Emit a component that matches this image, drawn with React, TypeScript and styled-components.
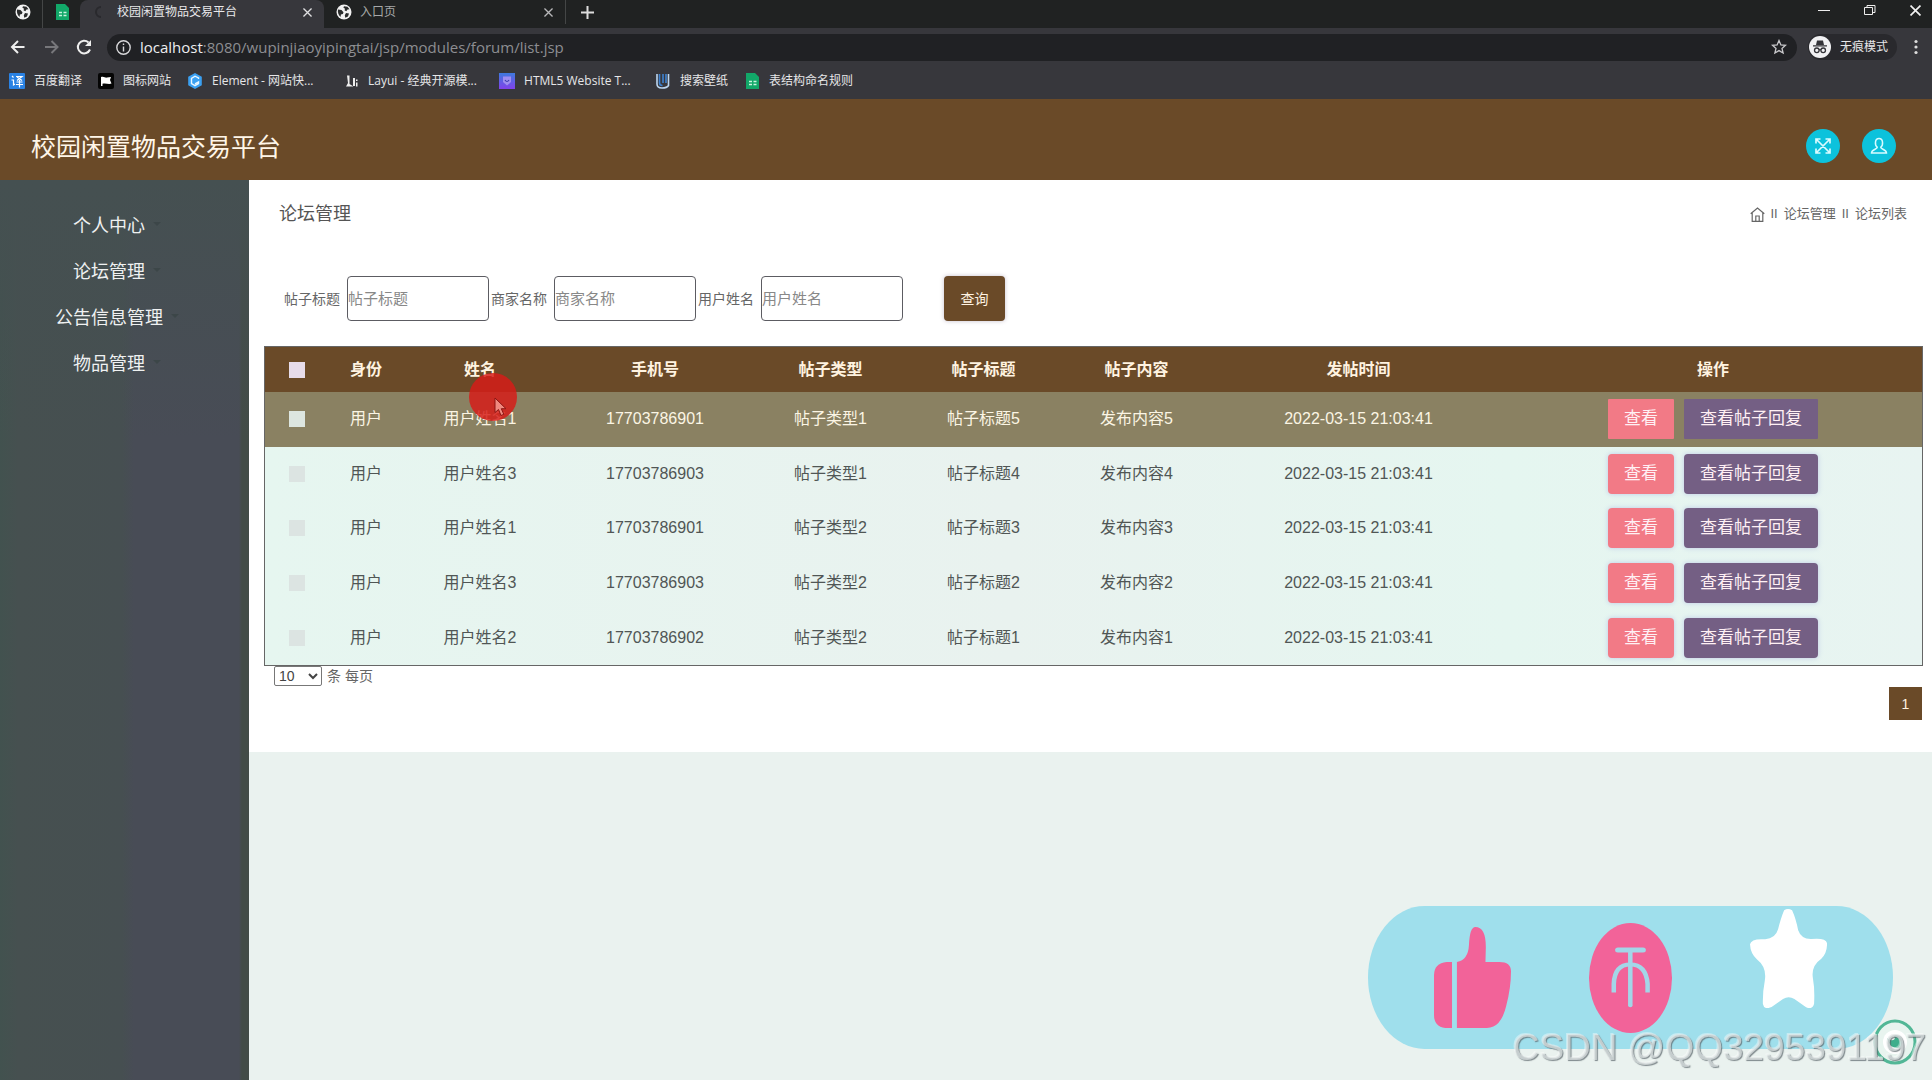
import React from "react";
import styled, { createGlobalStyle } from "styled-components";

const ui = `"Liberation Sans", "Noto Sans CJK SC", sans-serif`;
const chromeFont = `"Open Sans", "Noto Sans CJK SC", sans-serif`;
const brown = "#6a4a28";

const GlobalStyle = createGlobalStyle`
  *, *::before, *::after { box-sizing: border-box; }
  body { margin: 0; overflow: hidden; font-family: ${ui}; color: #555; background: #eaf2ef; }
  button, input, select { font-family: inherit; }
  button { padding: 0; border: 0; background: none; color: inherit; cursor: pointer; }
  a { color: inherit; text-decoration: none; }
  svg { display: block; flex: none; }
`;

const Page = styled.div`
  display: flex;
  flex-direction: column;
  min-height: 100vh;
`;

/* Browser frame */

const Browser = styled.div`
  font-family: ${chromeFont};
  color: #e6e6e8;
  background: #37373c;
`;

const TabStrip = styled.div`
  display: flex;
  height: 28px;
  background: #202222;
`;

const PinnedTab = styled.button<{ $divider?: boolean }>`
  display: flex;
  justify-content: center;
  width: ${(p) => (p.$divider ? 43 : 37)}px;
  padding: 4px 0 0 ${(p) => (p.$divider ? 4 : 0)}px;
  border-right: ${(p) => (p.$divider ? "1px solid #444646" : "0")};
`;

const Tab = styled.div<{ $active?: boolean }>`
  display: flex;
  align-items: center;
  gap: 8px;
  width: ${(p) => (p.$active ? 244 : 241)}px;
  padding: 0 12px 4px;
  border-radius: 8px 8px 0 0;
  font-size: 12px;
  line-height: 16px;
  color: ${(p) => (p.$active ? "#e8e8ea" : "#a6a8a8")};
  background: ${(p) => (p.$active ? "#37373c" : "transparent")};
`;

const TabTitle = styled.span`
  flex: 1;
  white-space: nowrap;
`;

const NewTab = styled.button`
  display: flex;
  align-items: center;
  height: 24px;
  padding: 0 15px;
  border-left: 1px solid #444646;
`;

const WindowControls = styled.div`
  display: flex;
  align-items: center;
  gap: 34px;
  margin-left: auto;
  padding: 0 11px 8px 0;
`;

const Toolbar = styled.div`
  display: flex;
  align-items: center;
  height: 38px;
  padding: 0 14px 0 9px;
`;

const NavButtons = styled.div`
  display: flex;
  gap: 15px;
  width: 98px;
`;

const AddressBar = styled.div`
  display: flex;
  flex: 1;
  align-items: center;
  gap: 9px;
  height: 27px;
  padding: 0 10px 0 9px;
  border-radius: 14px;
  font-size: 15px;
  line-height: 20px;
  color: #8d8e92;
  background: #202124;
`;

const Host = styled.span`
  color: #eeeef0;
`;

const Url = styled.span`
  flex: 1;
`;

const Incognito = styled.button`
  display: flex;
  align-items: center;
  gap: 9px;
  height: 26px;
  margin: 0 17px 0 11px;
  padding: 0 9px 0 1px;
  border-radius: 13px;
  font-size: 12px;
  line-height: 16px;
  background: #29292d;
`;

const Bookmarks = styled.nav`
  display: flex;
  gap: 16px;
  height: 33px;
  padding: 6px 9px;
`;

const Bookmark = styled.a<{ $wide?: boolean }>`
  display: flex;
  align-items: center;
  gap: 9px;
  width: ${(p) => (p.$wide ? "140px" : "auto")};
  height: 17px;
  font-size: 12px;
  line-height: 16px;
  white-space: nowrap;
`;

/* Application */

const Header = styled.header`
  display: flex;
  align-items: center;
  justify-content: space-between;
  height: 81px;
  padding: 14px 36px 0 31px;
  color: #fff6e8;
  background: ${brown};
`;

const Brand = styled.h1`
  margin: 0;
  font-size: 25px;
  font-weight: 400;
  line-height: 36px;
`;

const HeaderActions = styled.div`
  display: flex;
  gap: 22px;
  padding-bottom: 2px;
`;

const RoundButton = styled.button`
  display: grid;
  place-items: center;
  width: 34px;
  height: 34px;
  border-radius: 50%;
  background: #0cc2dc;
`;

const Body = styled.div`
  display: flex;
  flex: 1;
`;

const Sidebar = styled.nav`
  width: 249px;
  padding: 21px 31px 0 0;
  background:
    linear-gradient(#455051, rgba(69, 80, 81, 0) 260px),
    linear-gradient(90deg, #42524f, #465050 18px, #464f51 122px, #484c56 134px, #484c56 239px, #434c47 242px);
`;

const MenuLink = styled.a`
  display: flex;
  align-items: center;
  justify-content: center;
  height: 46px;
  font-size: 18px;
  color: #eff1f1;
`;

const Caret = styled.span`
  width: 0;
  margin-right: -8px;
  border: 4px solid transparent;
  border-top-color: #3c4648;
  transform: translate(8px, 2px);
`;

const Main = styled.main`
  flex: 1;
  min-width: 0;
`;

const Panel = styled.section`
  padding: 19px 10px 32px 15px;
  background: #fff;
`;

const PanelHead = styled.div`
  display: flex;
  justify-content: space-between;
  align-items: center;
  padding: 0 15px;
`;

const PanelTitle = styled.h2`
  margin: 0;
  font-size: 18px;
  font-weight: 400;
  line-height: 30px;
`;

const Crumbs = styled.div`
  display: flex;
  align-items: center;
  gap: 6px;
  font-size: 13px;
  line-height: 16px;
  color: #666;
`;

const Search = styled.form`
  display: flex;
  align-items: center;
  gap: 2px;
  padding: 47px 0 25px 20px;
`;

const Field = styled.label`
  display: flex;
  align-items: center;
  gap: 7px;
  font-size: 14px;
  line-height: 16px;
  color: #666;
`;

const TextInput = styled.input`
  width: 142px;
  height: 45px;
  padding: 0;
  border: 1px solid #5c5c62;
  border-radius: 4px;
  outline: 0;
  font-size: 15px;
  background: #fff;
  &::placeholder { color: #888; opacity: 1; }
`;

const SearchButton = styled.button`
  width: 61px;
  height: 45px;
  margin-left: 39px;
  border-radius: 4px;
  font-size: 14px;
  line-height: 16px;
  color: #fff3e2;
  background: ${brown};
  box-shadow: 0 0 4px rgba(90, 70, 110, 0.35);
`;

const Table = styled.table`
  width: 100%;
  height: 320px;
  table-layout: fixed;
  border-collapse: separate;
  border-spacing: 0;
  border: 1px solid #666;
  font-size: 16px;
  line-height: 20px;
  text-align: center;
  color: #505655;
  background: linear-gradient(90deg, #e6f6f0, #e9f2ef 45%, #e5f6f0 75%, #e8f4f1);
`;

const Th = styled.th`
  height: 45px;
  padding: 0;
  font-weight: 700;
  color: #fff3e0;
  background: ${brown};
`;

const Row = styled.tr<{ $active: boolean }>`
  color: ${(p) => (p.$active ? "#fbf5e4" : "inherit")};
  background: ${(p) => (p.$active ? "#8a8162" : "transparent")};
`;

const Td = styled.td`
  height: 54px;
  padding: 0;
`;

const Check = styled.input<{ $tone: string }>`
  display: block;
  appearance: none;
  width: 16px;
  height: 16px;
  margin: 0 auto;
  background: ${(p) => p.$tone};
`;

const Actions = styled.div`
  display: flex;
  justify-content: center;
  gap: 10px;
`;

const ActionButton = styled.button<{ $color: string; $flat: boolean }>`
  height: 40px;
  padding: 0 16px;
  border-radius: ${(p) => (p.$flat ? 1 : 4)}px;
  font-size: 17px;
  line-height: 20px;
  color: #fff0f4;
  background: ${(p) => p.$color};
  box-shadow: ${(p) => (p.$flat ? "none" : "0 0 5px rgba(130, 140, 220, 0.4)")};
`;

const PageSize = styled.label`
  display: flex;
  align-items: center;
  gap: 5px;
  padding-left: 10px;
  font-size: 14px;
  line-height: 20px;
  color: #666;
`;

const SizeSelect = styled.select`
  width: 48px;
  height: 20px;
  padding: 0;
  border: 1px solid #777;
  border-radius: 2px;
  font-size: 14px;
  color: #444;
  background: #fff;
`;

const Pager = styled.div`
  display: flex;
  justify-content: flex-end;
  padding-top: 1px;
`;

const PageButton = styled.button`
  width: 33px;
  height: 33px;
  font-size: 14px;
  color: #fff3e0;
  background: ${brown};
`;

/* Things floating above the page */

const Pointer = styled.div`
  position: absolute;
  left: 469px;
  top: 373px;
  width: 48px;
  height: 48px;
  border-radius: 50%;
  background: rgba(214, 28, 24, 0.84);
  pointer-events: none;
  svg { margin: 24px 0 0 25px; }
`;

const Reactions = styled.div`
  position: fixed;
  right: 39px;
  bottom: 31px;
  display: flex;
  align-items: center;
  gap: 78px;
  width: 525px;
  height: 143px;
  padding-left: 66px;
  border-radius: 57px / 72px;
  background: #9fdfec;
`;

const Raised = styled.span`
  padding-bottom: 38px;
`;

const Recorder = styled.div`
  position: fixed;
  right: 15px;
  bottom: 15px;
`;

const Watermark = styled.div`
  position: fixed;
  right: 6px;
  bottom: 11px;
  font-size: 37px;
  line-height: 42px;
  white-space: nowrap;
  color: rgba(226, 232, 232, 0.7);
  text-shadow: 1px 1px 1px rgba(90, 100, 105, 0.75), -1px -1px 0 rgba(255, 255, 255, 0.4);
`;

/* Icons */

const Globe = () => (
  <svg width="16" height="16" viewBox="0 0 16 16">
    <circle cx="8" cy="8" r="7.5" fill="#f2f2f2" />
    <path d="M2 5.5 5.5 6l2 2.2-.6 1.8-2 .6L4.6 13C2.600 11.500 1.500 8.500 2 5.500zM8 2.300l3.500.4 2 2.600-2 .3-1.200 1.600-1.800-.9.600-1.600-1.700-.9zM10 9l3 .500-1 3-2.700 1.200-.5-2.400z" fill="#2a2c2c" />
  </svg>
);
const Sheet = () => (
  <svg width="16" height="16" viewBox="0 0 16 16">
    <path d="M2 0h9l4 4v12H2z" fill="#12a869" />
    <path d="M5 8.500h3M9.500 8.500h3M5 11.500h3M9.500 11.500h3" stroke="#c9f3df" strokeWidth="1.300" />
  </svg>
);
const Cross = ({ size = 9, color = "#e0e0e2" }: { size?: number; color?: string }) => (
  <svg width={size} height={size} viewBox="0 0 10 10" stroke={color} strokeWidth="1.500">
    <path d="M.5.5l9 9M9.500.5l-9 9" />
  </svg>
);
const Arrow = ({ color, flip }: { color: string; flip?: boolean }) => (
  <svg width="18" height="18" viewBox="0 0 18 18" fill="none" stroke={color} strokeWidth="2">
    <path d={flip ? "M3 9h12M9.500 3 15.500 9l-6 6" : "M15.500 9h-12M9 3 3 9l6 6"} />
  </svg>
);
const Reload = () => (
  <svg width="18" height="18" viewBox="0 0 18 18" fill="none" stroke="#eee" strokeWidth="2">
    <path d="M15 11.500A6.300 6.300 0 1 1 13.500 4.500" />
    <path d="M16 2v6h-6z" fill="#eee" stroke="none" />
  </svg>
);
const Info = () => (
  <svg width="15" height="15" viewBox="0 0 15 15" fill="none" stroke="#d8d8da" strokeWidth="1.400">
    <circle cx="7.500" cy="7.500" r="6.700" />
    <path d="M7.500 6.500v5M7.500 3.500v1.600" />
  </svg>
);
const StarOutline = () => (
  <svg width="16" height="16" viewBox="0 0 16 16" fill="none" stroke="#c8c8cb" strokeWidth="1.300">
    <path d="m8 1.500 1.900 4.400 4.600.4-3.500 3.100 1.100 4.600L8 11.600 3.900 14 5 9.400 1.500 6.300l4.600-.4z" />
  </svg>
);
const IncognitoIcon = () => (
  <svg width="22" height="22" viewBox="0 0 22 22">
    <circle cx="11" cy="11" r="11" fill="#f1f1f3" />
    <path d="M8 4.500h6l1 4.500H7zM4 9.200h14v1.300H4z" fill="#333338" />
    <g fill="none" stroke="#333338" strokeWidth="1.300">
      <circle cx="7.800" cy="14.300" r="2.300" />
      <circle cx="14.200" cy="14.300" r="2.300" />
      <path d="M10 14q1-.8 2 0" />
    </g>
  </svg>
);
const Dots = () => (
  <svg width="4" height="16" viewBox="0 0 4 16" fill="#ddd">
    <circle cx="2" cy="2.500" r="1.600" />
    <circle cx="2" cy="8" r="1.600" />
    <circle cx="2" cy="13.500" r="1.600" />
  </svg>
);
const TranslateIcon = () => (
  <svg width="16" height="16" viewBox="0 0 16 16">
    <rect width="16" height="16" rx="1" fill="#2a82e4" />
    <path d="M3 3l1.500 1.500M2.500 7h2v5l1.500-1M7 3.500h6L8 7.500M8 4l5 3.500M7.500 9h6M7 11.500h7M10.500 7v7.500" fill="none" stroke="#fff" strokeWidth="1.200" />
  </svg>
);
const FlagIcon = () => (
  <svg width="16" height="16" viewBox="0 0 16 16">
    <rect width="16" height="16" rx="2" fill="#050505" />
    <path d="M3 13V4c3-1 4 1 6 .6l4-.6-1 3 1.500 3.500c-3 1.300-6-1-9 .3V13z" fill="#fff" />
  </svg>
);
const ElementIcon = () => (
  <svg width="16" height="16" viewBox="0 0 16 16">
    <path d="M8 0l6.800 3.800v8.400L8 16l-6.800-3.800V3.800z" fill="#3aa0f2" />
    <path d="M11.500 6V5L8 3.200 4.500 5.300v5.200L8 12.600l3.500-2V9L8 10.800" fill="none" stroke="#e9f6ff" strokeWidth="1.400" />
  </svg>
);
const LayuiIcon = () => (
  <svg width="16" height="16" viewBox="0 0 16 16">
    <path d="M4 2.500h2.500V11l4 2.500H3L5 10zM10 5h2v8h-2zM13 6.500h1.500V8H13zM13 9.500h1.500v4H13z" fill="#eee" />
  </svg>
);
const HtmlIcon = () => (
  <svg width="16" height="16" viewBox="0 0 16 16">
    <defs>
      <linearGradient id="violet" x2="0" y2="1">
        <stop stopColor="#3f79de" />
        <stop offset="1" stopColor="#8142ea" />
      </linearGradient>
    </defs>
    <rect width="16" height="16" fill="url(#violet)" />
    <path d="M4 3.500h8V9L8 12.500 4 9z" fill="#9f8df0" />
    <path d="M6 7q2 3 4 0" fill="none" stroke="#3d3fae" strokeWidth="1.200" />
  </svg>
);
const WallpaperIcon = () => (
  <svg width="16" height="16" viewBox="0 0 16 16" fill="none">
    <path d="M2 1v10q0 4 5 4t6.500-2.500V1" stroke="#bcd6f0" strokeWidth="1.600" />
    <path d="M4.500 1v9q0 2.500 3 2.500M8 1v9M11 1v9" stroke="#3f82d0" strokeWidth="1.600" />
  </svg>
);
const ExpandIcon = () => (
  <svg width="18" height="18" viewBox="0 0 18 18" fill="none" stroke="#d9fbff" strokeWidth="1.700">
    <path d="M2 2l14 14M16 2 2 16M2 6.500V2h4.500M11.500 2H16v4.500M16 11.500V16h-4.500M6.500 16H2v-4.500" />
  </svg>
);
const PersonIcon = () => (
  <svg width="18" height="18" viewBox="0 0 18 18" fill="none" stroke="#d9fbff" strokeWidth="1.500">
    <path d="M7.300 10.300C4.500 8 4.700 1.500 9 1.500s4.500 6.500 1.700 8.800c0 2 5.800 2 5.800 5.700h-15c0-3.700 5.800-3.700 5.800-5.700z" />
  </svg>
);
const HomeIcon = () => (
  <svg width="15" height="15" viewBox="0 0 15 15" fill="none" stroke="#666" strokeWidth="1.200">
    <path d="M.7 6.800 7.500 1l6.800 5.800M2.200 6v8.300h10.600V6M5.800 14V9h3.400v5" />
  </svg>
);
const ThumbIcon = () => (
  <svg width="77" height="101" viewBox="250 140 205 303" preserveAspectRatio="none" fill="#f26399">
    <path d="M298 245h-14q-34 4-34 40v118q0 36 30 40h18z" />
    <path d="M311 245q30-6 32-50 2-55 17-55 28 0 28 60l-1 45h37q31 0 31 28 0 50-13 105-14 65-51 65h-80z" />
  </svg>
);
const CoinIcon = () => (
  <svg width="83" height="110" viewBox="660 127 221 329" preserveAspectRatio="none">
    <ellipse cx="770.500" cy="291.500" rx="110.500" ry="164.500" fill="#f26399" />
    <path d="M737 208h67" stroke="#a3d6e8" strokeWidth="15" strokeLinecap="round" />
    <path d="M770 208v165" stroke="#a3d6e8" strokeWidth="12" strokeLinecap="round" />
    <path d="M726 335v-26q2-58 44-58t46 58v26" fill="none" stroke="#a3d6e8" strokeWidth="12" />
  </svg>
);
const StarIcon = () => (
  <svg width="77" height="99" viewBox="1087 88 203 297" preserveAspectRatio="none" fill="#fff">
    <path d="M1177 92q10-8 21 0 10 25 16 60 8 27 35 26 38-4 41 12 1 30-15 47-28 22-22 60 5 30 3 75-5 20-22 10l-30-24q-15-11-30 0l-30 24q-20 10-23-9-1-35 5-70 6-40-21-64-17-18-18-45 3-18 40-15 27-2 34-30 8-36 16-57z" />
  </svg>
);

/* Data */

const bookmarks = [
  { label: "百度翻译", icon: <TranslateIcon /> },
  { label: "图标网站", icon: <FlagIcon /> },
  { label: "Element - 网站快...", icon: <ElementIcon />, wide: true },
  { label: "Layui - 经典开源模...", icon: <LayuiIcon />, wide: true },
  { label: "HTML5 Website T...", icon: <HtmlIcon />, wide: true },
  { label: "搜索壁纸", icon: <WallpaperIcon /> },
  { label: "表结构命名规则", icon: <Sheet /> },
];
const menu = ["个人中心", "论坛管理", "公告信息管理", "物品管理"];
const filters = ["帖子标题", "商家名称", "用户姓名"];
const columns = [
  { title: "身份", width: 76 },
  { title: "姓名", width: 152 },
  { title: "手机号", width: 198 },
  { title: "帖子类型", width: 153 },
  { title: "帖子标题", width: 153 },
  { title: "帖子内容", width: 153 },
  { title: "发帖时间", width: 291 },
  { title: "操作", width: 418 },
];
const posts = [
  ["用户", "用户姓名1", "17703786901", "帖子类型1", "帖子标题5", "发布内容5", "2022-03-15 21:03:41"],
  ["用户", "用户姓名3", "17703786903", "帖子类型1", "帖子标题4", "发布内容4", "2022-03-15 21:03:41"],
  ["用户", "用户姓名1", "17703786901", "帖子类型2", "帖子标题3", "发布内容3", "2022-03-15 21:03:41"],
  ["用户", "用户姓名3", "17703786903", "帖子类型2", "帖子标题2", "发布内容2", "2022-03-15 21:03:41"],
  ["用户", "用户姓名2", "17703786902", "帖子类型2", "帖子标题1", "发布内容1", "2022-03-15 21:03:41"],
];

const BrowserFrame = () => (
  <Browser>
    <TabStrip>
      <PinnedTab $divider aria-label="标签页"><Globe /></PinnedTab>
      <PinnedTab aria-label="表格"><Sheet /></PinnedTab>
      <Tab $active>
        <svg width="17" height="16" viewBox="0 0 17 16" fill="none" stroke="#29292d" strokeWidth="2">
          <path d="M9 3a5 5 0 0 0 0 10" />
        </svg>
        <TabTitle>校园闲置物品交易平台</TabTitle>
        <button aria-label="关闭标签页"><Cross /></button>
      </Tab>
      <Tab>
        <Globe />
        <TabTitle>入口页</TabTitle>
        <button aria-label="关闭标签页"><Cross color="#b8b8ba" /></button>
      </Tab>
      <NewTab aria-label="新标签页">
        <svg width="13" height="13" viewBox="0 0 13 13" stroke="#ddd" strokeWidth="2">
          <path d="M6.500 0v13M0 6.500h13" />
        </svg>
      </NewTab>
      <WindowControls>
        <button aria-label="最小化">
          <svg width="12" height="12" viewBox="0 0 12 12" stroke="#eee"><path d="M0 6.500h12" /></svg>
        </button>
        <button aria-label="还原">
          <svg width="12" height="12" viewBox="0 0 12 12" fill="none" stroke="#eee">
            <path d="M.5 3.500h8v7h-8zM3 3V1.500h8v7H9" />
          </svg>
        </button>
        <button aria-label="关闭"><Cross size={11} color="#f2f2f2" /></button>
      </WindowControls>
    </TabStrip>
    <Toolbar>
      <NavButtons>
        <button aria-label="后退"><Arrow color="#eee" /></button>
        <button aria-label="前进"><Arrow color="#77777b" flip /></button>
        <button aria-label="刷新"><Reload /></button>
      </NavButtons>
      <AddressBar>
        <Info />
        <Url><Host>localhost</Host>:8080/wupinjiaoyipingtai/jsp/modules/forum/list.jsp</Url>
        <button aria-label="收藏"><StarOutline /></button>
      </AddressBar>
      <Incognito><IncognitoIcon />无痕模式</Incognito>
      <button aria-label="菜单"><Dots /></button>
    </Toolbar>
    <Bookmarks>
      {bookmarks.map((b) => (
        <Bookmark key={b.label} href="#" $wide={b.wide}>{b.icon}{b.label}</Bookmark>
      ))}
    </Bookmarks>
  </Browser>
);

const PostTable = () => (
  <Table>
    <colgroup>
      <col width={63} />
      {columns.map((c) => <col key={c.title} width={c.width} />)}
    </colgroup>
    <thead>
      <tr>
        <Th><Check type="checkbox" aria-label="全选" $tone="#e7dcea" /></Th>
        {columns.map((c) => <Th key={c.title}>{c.title}</Th>)}
      </tr>
    </thead>
    <tbody>
      {posts.map((post, i) => (
        <Row key={i} $active={i === 0}>
          <Td><Check type="checkbox" aria-label={`选择${post[4]}`} $tone={i === 0 ? "#dde6e0" : "#dce4e2"} /></Td>
          {post.map((value, j) => <Td key={j}>{value}</Td>)}
          <Td>
            <Actions>
              <ActionButton $color="#f27a86" $flat={i === 0}>查看</ActionButton>
              <ActionButton $color="#745f84" $flat={i === 0}>查看帖子回复</ActionButton>
            </Actions>
          </Td>
        </Row>
      ))}
    </tbody>
  </Table>
);

export default function App() {
  return (
    <Page>
      <GlobalStyle />
      <BrowserFrame />
      <Header>
        <Brand>校园闲置物品交易平台</Brand>
        <HeaderActions>
          <RoundButton aria-label="全屏"><ExpandIcon /></RoundButton>
          <RoundButton aria-label="个人信息"><PersonIcon /></RoundButton>
        </HeaderActions>
      </Header>
      <Body>
        <Sidebar>
          {menu.map((item) => <MenuLink key={item} href="#">{item}<Caret /></MenuLink>)}
        </Sidebar>
        <Main>
          <Panel>
            <PanelHead>
              <PanelTitle>论坛管理</PanelTitle>
              <Crumbs>
                <HomeIcon /><span>II</span><a href="#">论坛管理</a><span>II</span><span>论坛列表</span>
              </Crumbs>
            </PanelHead>
            <Search onSubmit={(e) => e.preventDefault()}>
              {filters.map((name) => (
                <Field key={name}>{name}<TextInput type="text" placeholder={name} /></Field>
              ))}
              <SearchButton type="submit">查询</SearchButton>
            </Search>
            <PostTable />
            <PageSize>
              <SizeSelect defaultValue="10">
                <option>10</option>
                <option>25</option>
                <option>50</option>
              </SizeSelect>
              条 每页
            </PageSize>
            <Pager><PageButton>1</PageButton></Pager>
          </Panel>
        </Main>
      </Body>
      <Pointer>
        <svg width="14" height="20" viewBox="0 0 14 20">
          <path d="M1 1v14.500l3.500-3 2.500 6 2.800-1.200-2.500-5.600H12z" fill="#f08a80" stroke="#8d1512" />
        </svg>
      </Pointer>
      <Reactions>
        <ThumbIcon />
        <CoinIcon />
        <Raised><StarIcon /></Raised>
      </Reactions>
      <Recorder>
        <svg width="44" height="46" viewBox="0 0 44 46">
          <ellipse cx="22" cy="23" rx="20" ry="21" fill="#e8f4ef" stroke="#52b796" strokeWidth="3" />
          <circle cx="22" cy="23" r="12" fill="#fff" />
          <path d="M14 19q2 11 13 10 4-5 1-10-3-3-7-2 2 3-1 4-3 1-6-2z" fill="#3fae8c" />
        </svg>
      </Recorder>
      <Watermark>CSDN @QQ3295391197</Watermark>
    </Page>
  );
}
